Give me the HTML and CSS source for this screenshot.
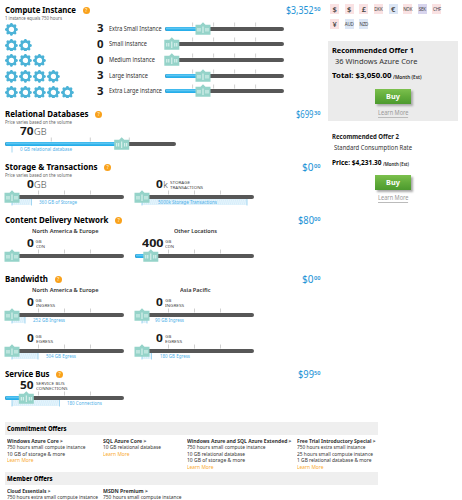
FILE: index.html
```html
<!DOCTYPE html>
<html lang="en">
<head>
<meta charset="utf-8">
<title>Pricing calculator</title>
<link rel="stylesheet" href="styles.css">
</head>
<body>
<div class="top">
<main class="calc">
  <section class="sec compute">
    <header><h2 data-w="71">Compute Instance</h2><i class="help">?</i><p class="price"><span data-w="27.5">$3,352</span><sup data-w="6.5">50</sup></p></header>
    <p class="sub" data-w="57">1 instance equals 750 hours</p>
    <div class="inst"><div class="gears" data-n="1"></div><b class="num" data-w="6.5">3</b><span class="name"><span data-w="52.5">Extra Small Instance</span></span><div class="slider" data-kind="inst" data-v="38"></div></div>
    <div class="inst"><div class="gears" data-n="2"></div><b class="num" data-w="6.5">0</b><span class="name"><span data-w="38">Small instance</span></span><div class="slider" data-kind="inst" data-v="6.8"></div></div>
    <div class="inst"><div class="gears" data-n="3"></div><b class="num" data-w="6.5">0</b><span class="name"><span data-w="46">Medium instance</span></span><div class="slider" data-kind="inst" data-v="6.8"></div></div>
    <div class="inst"><div class="gears" data-n="4"></div><b class="num" data-w="6.5">3</b><span class="name"><span data-w="39">Large instance</span></span><div class="slider" data-kind="inst" data-v="38"></div></div>
    <div class="inst"><div class="gears" data-n="5"></div><b class="num" data-w="6.5">3</b><span class="name"><span data-w="53">Extra Large instance</span></span><div class="slider" data-kind="inst" data-v="38"></div></div>
  </section>

  <section class="sec database">
    <header><h2 data-w="83.5">Relational Databases</h2><i class="help">?</i><p class="price"><span data-w="17.5">$699</span><sup data-w="6.5">30</sup></p></header>
    <p class="sub" data-w="67">Price varies based on the volume</p>
    <div class="meter"><div class="val"><b class="num" data-w="13.5">70</b><span class="gb" data-w="12.5">GB</span></div>
    <div class="slider" data-kind="db" data-v="116.7" data-range="0" data-label="0 GB relational database" data-x="15" data-len="52"></div></div>
  </section>

  <section class="sec storage">
    <header><h2 data-w="92.5">Storage &amp; Transactions</h2><i class="help">?</i><p class="price"><span data-w="11.5">$0</span><sup data-w="6.5">00</sup></p></header>
    <p class="sub" data-w="67">Price varies based on the volume</p>
    <div class="pair">
      <div class="meter"><div class="val"><b class="num" data-w="6.8">0</b><span class="gb" data-w="12.5">GB</span></div>
      <div class="slider" data-v="7" data-range="19.5" data-label="360 GB of Storage" data-x="34" data-len="38"></div></div>
      <div class="meter"><div class="val"><b class="num" data-w="6.8">0</b><span class="gb">k</span><span class="unit"><span data-w="20">STORAGE</span><span data-w="33">TRANSACTIONS</span></span></div>
      <div class="slider" data-v="7" data-range="105" data-label="5000k Storage Transactions" data-x="23" data-len="59"></div></div>
    </div>
  </section>

  <section class="sec cdn">
    <header><h2 data-w="103.5">Content Delivery Network</h2><i class="help">?</i><p class="price"><span data-w="16">$80</span><sup data-w="6.5">00</sup></p></header>
    <div class="pair">
      <div class="meter"><h3><span data-w="66.5">North America &amp; Europe</span></h3><div class="val"><b class="num" data-w="6.8">0</b><span class="unit"><span>GB</span><span data-w="9">CDN</span></span></div><div class="slider" data-v="7"></div></div>
      <div class="meter"><h3><span data-w="43">Other Locations</span></h3><div class="val"><b class="num" data-w="21.5">400</b><span class="unit"><span>GB</span><span data-w="9">CDN</span></span></div><div class="slider" data-v="15.8"></div></div>
    </div>
  </section>

  <section class="sec bandwidth">
    <header><h2 data-w="43">Bandwidth</h2><i class="help">?</i><p class="price"><span data-w="11.5">$0</span><sup data-w="6.5">00</sup></p></header>
    <div class="pair">
      <div class="meter"><h3><span data-w="66.5">North America &amp; Europe</span></h3><div class="val"><b class="num" data-w="6.8">0</b><span class="unit"><span>GB</span><span data-w="19">INGRESS</span></span></div>
        <div class="slider" data-v="7" data-range="13" data-label="252 GB Ingress" data-x="28" data-len="32"></div>
        <div class="val"><b class="num" data-w="6.8">0</b><span class="unit"><span>GB</span><span data-w="17">EGRESS</span></span></div>
        <div class="slider" data-v="7" data-range="26" data-label="504 GB Egress" data-x="41" data-len="30"></div></div>
      <div class="meter"><h3><span data-w="30.5">Asia Pacific</span></h3><div class="val"><b class="num" data-w="6.8">0</b><span class="unit"><span>GB</span><span data-w="19">INGRESS</span></span></div>
        <div class="slider" data-v="7" data-range="5" data-label="90 GB Ingress" data-x="20" data-len="29"></div>
        <div class="val"><b class="num" data-w="6.8">0</b><span class="unit"><span>GB</span><span data-w="17">EGRESS</span></span></div>
        <div class="slider" data-v="7" data-range="9.5" data-label="180 GB Egress" data-x="25" data-len="30"></div></div>
    </div>
  </section>

  <section class="sec bus">
    <header><h2 data-w="44.5">Service Bus</h2><i class="help">?</i><p class="price"><span data-w="16">$99</span><sup data-w="6.5">50</sup></p></header>
    <div class="meter"><div class="val"><b class="num" data-w="13.5">50</b><span class="unit"><span data-w="28.5">SERVICE BUS</span><span data-w="31.5">CONNECTIONS</span></span></div>
    <div class="slider" data-v="21.3" data-range="47.5" data-label="180 Connections" data-x="62" data-len="35"></div></div>
  </section>
</main>

<aside class="side">
  <div class="flags"><i class="sym">$</i><i class="sym">$</i><i class="sym">£</i><i>DKK</i><i class="sym blue">€</i><i>NOK</i><i class="violet">SEK</i><i>CHF</i><i class="sym">¥</i><i class="blue">AUD</i><i class="blue">NZD</i></div>
  <div class="offer first">
    <h4><span data-w="82">Recommended Offer 1</span></h4>
    <p class="plan"><span data-w="82.5">36 Windows Azure Core</span></p>
    <p class="cost"><b data-w="59.5">Total: $3,050.00</b><small data-w="28.5">/Month (Est)</small></p>
    <a class="buy">Buy</a>
    <a class="more"><span data-w="30.5">Learn More</span></a>
  </div>
  <div class="offer second">
    <h4><span data-w="67">Recommended Offer 2</span></h4>
    <p class="plan"><span data-w="78">Standard Consumption Rate</span></p>
    <p class="cost"><b data-w="49.5">Price: $4,231.30</b><small data-w="26">/Month (Est)</small></p>
    <a class="buy">Buy</a>
    <a class="more"><span data-w="30.5">Learn More</span></a>
  </div>
</aside>
</div>

<footer class="offers">
  <h5><span data-w="59.5">Commitment Offers</span></h5>
  <div class="cols">
    <div><b data-w="56">Windows Azure Core &gt;</b><span data-w="78.5">750 hours small compute instance</span><span data-w="58">10 GB of storage &amp; more</span><a data-w="26.5">Learn More</a></div>
    <div><b data-w="43.5">SQL Azure Core &gt;</b><span data-w="58">10 GB relational database</span><a data-w="26.5">Learn More</a></div>
    <div><b data-w="104.5">Windows Azure and SQL Azure Extended &gt;</b><span data-w="78.5">750 hours small compute instance</span><span data-w="58">10 GB relational database</span><span data-w="58">10 GB of storage &amp; more</span><a data-w="26.5">Learn More</a></div>
    <div><b data-w="78.5">Free Trial Introductory Special &gt;</b><span data-w="68.5">750 hours extra small instance</span><span data-w="76">25 hours small compute instance</span><span data-w="74.5">1 GB relational database &amp; more</span><a data-w="26.5">Learn More</a></div>
  </div>
  <h5><span data-w="45.5">Member Offers</span></h5>
  <div class="cols">
    <div><b data-w="43.5">Cloud Essentials &gt;</b><span data-w="91">750 hours extra small compute instance</span></div>
    <div><b data-w="45">MSDN Premium &gt;</b><span data-w="78.5">750 hours small compute instance</span></div>
  </div>
</footer>
<script>
const KINDS = {
  inst: { w: 119, ticks: [27.6, 48.6, 69.6, 90.6] },
  db: { w: 171, ticks: [46.3, 85.3, 124.3] },
  plain: { w: 119, ticks: [33.5, 59.5, 85.5] }
};

// Eight-toothed gear, drawn around the centre of a 12x12 box.
function gear() {
  let teeth = "";
  for (let a = 0; a < 360; a += 45) {
    teeth += `<path d="M3.9 2.4 5.3 0h1.4l1.4 2.4z" transform="rotate(${a} 6 6)" fill="#4cb3d7"/>`;
  }
  return `<svg viewBox="0 0 12 12">${teeth}<circle cx="6" cy="6" r="3.55" fill="none" stroke="#4cb3d7" stroke-width="2.1"/></svg>`;
}

document.querySelectorAll(".gears").forEach(g => {
  g.innerHTML = gear().repeat(+g.dataset.n);
});

document.querySelectorAll(".slider").forEach(s => {
  const d = s.dataset, k = KINDS[d.kind || "plain"], v = +d.v;
  let out = k.ticks.map(t => `<path class="tick" d="M${t} -.5v4"/>`).join("");
  if (d.range !== undefined) {
    const r = +d.range;
    out += `<rect class="range" x="7" y="8" width="${r}" height="6"/><path class="edge" d="M7 8v6.5"/>`;
    for (let x = 2; x < r; x += 2) out += `<path class="edge" opacity=".2" d="M${7 + x} 8l-2 6"/>`;
    if (r) out += `<path class="edge" d="M${7 + r} 8v6.5"/>`;
    out += `<text class="hint" x="${d.x}" y="13.4" textLength="${d.len}" lengthAdjust="spacingAndGlyphs">${d.label}</text>`;
  }
  out += `<rect class="track" y="4" width="${k.w}" height="4" rx="2"/>`;
  if (v > 8) out += `<rect class="fill" y="4" width="${v}" height="4" rx="2"/><rect class="shine" x="1" y="4.5" width="${v - 1}" height="1.8"/>`;
  out += `<path class="handle" d="M${v - 7.5} 1.8h5l2.5-2.5 2.5 2.5h5v10h-15z"/>` +
    `<path class="mark" d="M${v - 5} 5v3.5M${v - 3} 5v3.5M${v} 3.5v6.5M${v + 3} 5v3.5M${v + 5} 5v3.5"/>`;
  s.innerHTML = `<svg width="${k.w}" height="12">${out}</svg>`;
});

document.querySelectorAll("[data-w]").forEach(e => {
  const w = +e.dataset.w, natural = e.getBoundingClientRect().width;
  e.style.marginRight = (w - natural) + "px";
  e.style.transform = `scaleX(${w / natural})`;
});
</script>
</body>
</html>
```

FILE: styles.css
```css
* { box-sizing: border-box; margin: 0; padding: 0; }
body { width: 462px; height: 500px; overflow: hidden; background: #fff; color: #222; font-family: "Noto Sans", "Open Sans", sans-serif; font-size: 6px; }
h2, h3, h4, h5, p { font-size: inherit; white-space: nowrap; }
i { font-style: normal; }
[data-w] { display: inline-block; flex: none; justify-self: start; white-space: nowrap; transform-origin: 0 50%; }

.top { display: flex; height: 422px; }
.calc { width: 327.5px; padding: 5px 7.5px 0 5px; }
.sec header { display: flex; align-items: center; height: 10px; }
.sec h2 { color: #000; font-size: 7.9px; line-height: 10px; font-weight: 700; }
.help { width: 7px; height: 7px; margin-left: 6.7px; border-radius: 50%; background: #f9a11b; color: #fde0a8; font-size: 5px; line-height: 7px; font-weight: 700; text-align: center; }
.price { display: flex; align-items: center; margin-left: auto; color: #1c93d6; font-size: 10.5px; line-height: 10px; }
.price sup { padding-bottom: 1px; font-size: 5.2px; line-height: 7px; font-weight: 600; }
.sub { display: block; width: max-content; color: #666; font-size: 5px; line-height: 6px; }
.compute { height: 104px; }
.database, .storage { height: 53px; }
.cdn { height: 59px; }
.bandwidth { height: 95px; }

.inst { display: grid; grid-template-columns: 92px 12px 56px 119px; align-items: center; height: 15.67px; }
.gears { display: flex; gap: 1.2px; }
.gears svg { width: 12.8px; height: 12.8px; margin-top: 1px; }
.num { color: #1a1a1a; font-size: 10.2px; line-height: 13px; font-weight: 700; }
.name { color: #333; font-size: 6.3px; line-height: 12px; }

.pair { display: grid; grid-template-columns: 119px 119px; column-gap: 10.7px; }
.meter h3 { padding-left: 2px; height: 12px; text-align: center; color: #333; font-size: 5.9px; line-height: 12px; font-weight: 600; }
.val { display: flex; align-items: center; height: 13px; }
.val .num { margin-left: 21.8px; }
.val .num[data-w="13.5"] { margin-left: 15px; }
.val .num[data-w="21.5"] { margin-left: 7.1px; }
.gb { color: #444; font-size: 9.2px; line-height: 12px; font-weight: 300; }
.unit { display: flex; flex-direction: column; align-items: flex-start; margin-left: 2px; color: #444; font-size: 4.3px; line-height: 4.6px; }

.slider { height: 23px; }
.inst .slider { height: 12px; }
.slider svg { display: block; overflow: visible; }
.track { fill: #575757; }
.fill { fill: #26aeea; }
.shine { fill: #5cc5f1; }
.tick { stroke: #c4c4c4; stroke-width: .8; }
.handle { fill: #95d3c9; }
.mark { stroke: #e4f6f2; stroke-width: 1; }
.range { fill: #e5f4fc; }
.edge { stroke: #8ccbee; stroke-width: .8; fill: none; }
.hint { fill: #4fb0e8; font-size: 4.7px; }

.side { width: 134.5px; padding-top: 4px; }
.flags { display: grid; grid-template-columns: repeat(8, 9px); column-gap: 5.65px; row-gap: 4.5px; height: 37px; padding-left: 2.5px; align-content: start; }
.flags i { display: flex; align-items: center; justify-content: center; width: 9px; height: 10px; background: #fae2e3; color: #444; font-size: 4.5px; letter-spacing: -.2px; }
.flags .sym { font-size: 7.5px; font-weight: 600; }
.flags .blue { background: #dce6f5; }
.flags .violet { background: #d8d5ee; }
.offer { display: flex; flex-direction: column; width: 130px; padding-left: 4px; }
.offer h4 { color: #000; font-size: 7.6px; line-height: 10px; }
.plan { padding-left: 3.5px; color: #333; font-size: 7.4px; line-height: 12px; }
.cost { display: flex; align-items: center; height: 16px; color: #000; font-size: 7.4px; line-height: 10px; }
.cost small { margin: 3px 0 0 2px; color: #222; font-size: 4.8px; line-height: 6px; font-weight: 600; }
.first { height: 80px; padding-top: 4px; background: #ebebeb; }
.second { padding-top: 11px; }
.second h4 { color: #222; font-size: 6.1px; }
.second .plan { padding-left: 2px; font-size: 6.2px; }
.second .cost { font-size: 6.4px; height: 17px; }
.second .cost small { font-size: 4.5px; }
.buy { width: 35.5px; height: 15px; margin: 6px 0 0 43.7px; background: linear-gradient(#7cc04d, #62ac3b 50%, #4c9a2e); box-shadow: 1.5px 1.5px 2px #aaa; color: #fff; font-size: 7.3px; line-height: 15px; font-weight: 700; text-align: center; }
.second .buy { margin-top: 4px; }
.more { margin: 5px 0 0 46px; color: #999; font-size: 6.2px; line-height: 8px; }
.more span { border-bottom: .5px solid #bbb; }
.second .more { margin-top: 4px; }

.offers { width: 373px; margin-left: 5px; color: #333; }
.offers h5 { height: 12.7px; padding: 1.2px 0 0 2.3px; background: #efefef; color: #000; font-size: 6.2px; line-height: 12px; font-weight: 800; }
.cols { display: grid; grid-template-columns: 96px 83.7px 110px 80px; height: 37.3px; padding: 3.2px 0 0 2.3px; font-size: 5.1px; line-height: 6.4px; }
.cols > div { display: flex; flex-direction: column; align-items: flex-start; }
.cols a { color: #f9ab2f; }
```
